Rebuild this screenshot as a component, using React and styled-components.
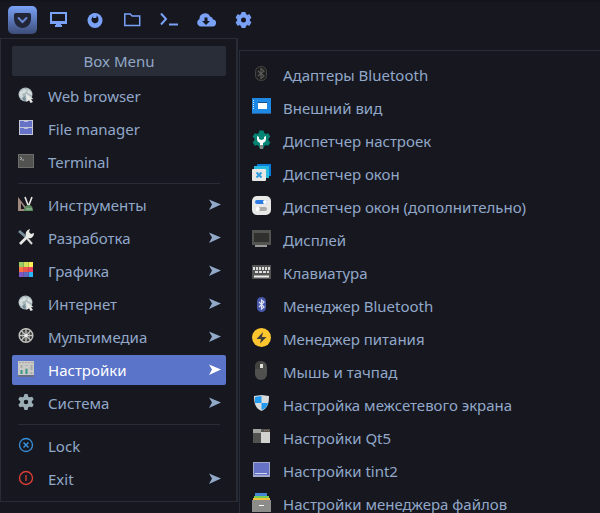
import React, { useState } from "react";
import styled, { createGlobalStyle, css } from "styled-components";

const color = {
  bg: "#171720",
  edge: "#282c37",
  title: "#292d37",
  text: "#91a8c8",
  accent: "#7aa2f7",
  active: "#5a74ca",
};

const GlobalStyle = createGlobalStyle`
  * { box-sizing: border-box; }
  html, body { margin: 0; height: 100%; overflow: hidden; background: ${color.bg}; }
  body { font: 15px/20px "Noto Sans", sans-serif; color: ${color.text}; }
  button { font: inherit; color: inherit; background: none; border: 0; padding: 0; margin: 0; }
`;

const Desktop = styled.div`
  height: 100vh;
  overflow: hidden;
  display: flex;
  flex-direction: column;
`;

const Toolbar = styled.header`
  flex: none;
  display: flex;
  align-items: center;
  height: 38px;
  padding: 0 8px;
  border-top: 2px solid #14151c;
`;

const StartButton = styled.button`
  display: grid;
  place-items: center;
  width: 29px;
  height: 28px;
  margin-right: 12px;
  border-radius: 5px;
  background: linear-gradient(#7aa2f7, #3c4c78);
`;

const LaunchButton = styled.button`
  display: grid;
  place-items: center;
  width: 20px;
  height: 20px;
  margin-right: 17px;
  color: ${color.accent};
`;

const Menus = styled.main`
  flex: 1;
  display: flex;
  align-items: flex-start;
  min-height: 0;
`;

const Menu = styled.nav`
  flex: none;
  width: 238px;
  padding: 7px 10px 7px 11px;
  border: 1px solid ${color.edge};
  border-right-width: 2px;
`;

const MenuTitle = styled.h1`
  margin: 0 0 5px;
  padding: 5px 0;
  font-size: inherit;
  font-weight: 400;
  text-align: center;
  border-radius: 2px;
  background: ${color.title};
`;

const Submenu = styled.nav`
  flex: 1;
  min-width: 0;
  margin: 12px 0 0 1px;
  padding: 9px 12px;
  border: solid ${color.edge};
  border-width: 1px 0 0 1px;
`;

const List = styled.ul`
  list-style: none;
  margin: 0;
  padding: 0;
  display: flex;
  flex-direction: column;
  gap: 3px;
`;

const Separator = styled.hr`
  margin: 6px;
  border: 0;
  border-top: 1px solid ${color.edge};
`;

const MenuItem = styled.button`
  display: flex;
  align-items: center;
  width: 100%;
  height: 30px;
  padding: 0 5px 0 ${(p) => (p.$wide ? 0 : 6)}px;
  gap: ${(p) => (p.$wide ? 12 : 14)}px;
  text-align: left;
  white-space: nowrap;
  border-radius: 2px;
  ${(p) => p.$active && css`
    color: #fff;
    background: ${color.active};
  `}
`;

const Icon = styled.svg`
  flex: none;
  display: block;
  margin-bottom: 3px;
`;

const Glyph = styled.svg`
  display: block;
`;

const Label = styled.span`
  flex: 1;
`;

const art = {
  globe: (
    <>
      <circle cx="7.5" cy="7.5" r="7" fill="#a9b8bd" />
      <path d="M2 5 6 2l3 1-2 3-3 1 1 3-1 2-3-4zM10 2l4 4v2l-3-1-2-2z" fill="#d5dcdc" />
      <path d="M4 11 7 9l1 4-2 1z" fill="#78909c" />
      <path d="M8 6.500 15.500 12l-2.500.3 2 2.700-2.500 1-1.500-3L8.500 15z" fill="#e6e8e5" />
    </>
  ),
  files: (
    <>
      <path d="M1 0h14v15H1z" fill="#c5c8d6" />
      <path d="M2 1h12v6H2zM2 8h12v6H2z" fill="#6572c8" />
      <path d="M6 1h4v1H6zM6 8h4v1H6z" fill="#b8bde0" />
    </>
  ),
  terminal: (
    <>
      <path d="M0 1h16v14H0z" fill="#6c6c6a" />
      <path d="M1 2h14v12H1z" fill="#525250" />
      <path d="m2 4 2 1.500L2 7M4 7h2" stroke="#ccc" strokeWidth=".8" fill="none" />
    </>
  ),
  tools: (
    <>
      <path d="M0 1v14h11zM3 7l4 6H3z" fill="#a1887f" fillRule="evenodd" />
      <path d="m7 1 3 8M14 1l-3 8" stroke="#ece9e4" strokeWidth="1.600" />
      <path d="M6 15c0-4 2-6 5-6s4 3 4 6z" fill="#5c8a61" />
      <path d="M8 13h6" stroke="#8fb38d" strokeWidth="1.500" />
    </>
  ),
  dev: (
    <>
      <path d="m1 2 7 6" stroke="#78909c" strokeWidth="2.800" />
      <path d="m8 8 6 7" stroke="#d8d8d5" strokeWidth="2" />
      <path d="m2 15 8-8" stroke="#e8e8e4" strokeWidth="2.600" />
      <path d="M8 7c-1-4 1-6 4-7l-1 3 2 2 3-1c0 4-3 6-6 5z" fill="#e8e8e4" />
    </>
  ),
  graphics: (
    <>
      {["#9ccc65", "#d4e157", "#ffee58", "#ff7043", "#ef5350", "#ec4065", "#7e57c2", "#5c6bc0", "#29b6f6"].map((fill, i) => (
        <rect key={fill} x={1 + (i % 3) * 5} y={Math.floor(i / 3) * 5} width={i % 3 === 2 ? 4 : 5} height="5" fill={fill} />
      ))}
      <path d="M5.500 0v15M10.500 0v15" stroke="#333" strokeOpacity=".2" />
    </>
  ),
  media: (
    <>
      <circle cx="8" cy="7.5" r="6.800" fill="#2c2c2d" stroke="#bdbdba" strokeWidth="1.500" />
      <path d="M8 1v13M1.500 7.500h13M3.500 3l9 9M12.500 3l-9 9" stroke="#c8c8c5" strokeWidth="1.300" />
      <circle cx="8" cy="7.500" r="4" fill="none" stroke="#aaa" strokeWidth=".7" />
      <circle cx="8" cy="7.500" r="1.500" fill="#eee" />
    </>
  ),
  mixer: (
    <>
      <path d="M0 0h16v15H0z" fill="#c9c9c5" />
      <path d="M0 14h16v2H0z" fill="#686e88" />
      <path d="M1 1.500h14" stroke="#aca7a2" strokeDasharray="2 1" />
      <path d="M3.500 4v9M8.500 4v9M13.500 4v9" stroke="#a8adaa" strokeWidth="2" />
      <path d="M3.500 9v4M8.500 8v5" stroke="#409b91" strokeWidth="2" />
      <path d="M2 8h3M7 6h3M12 10h3" stroke="#e5e5e2" />
    </>
  ),
  system: (
    <>
      <circle cx="8" cy="8" r="4" fill="none" stroke="#9badb5" strokeWidth="3.500" />
      {[0, 60, 120, 180, 240, 300].map((a) => (
        <path key={a} d="m5.500 3.500 1-3.500h3l1 3.500z" fill="#9badb5" transform={`rotate(${a} 8 8)`} />
      ))}
    </>
  ),
  lock: (
    <>
      <circle cx="8" cy="8" r="6.500" fill="none" stroke="#3790db" strokeWidth="1.300" />
      <path d="m5.500 5.500 5 5M10.500 5.500l-5 5" stroke="#3790db" strokeWidth="1.500" />
    </>
  ),
  exit: (
    <>
      <circle cx="8" cy="8" r="6.500" fill="none" stroke="#dc3e36" strokeWidth="1.400" />
      <path d="M8 5v6" stroke="#c63b35" strokeWidth="1.500" />
    </>
  ),
  adapter: (
    <>
      <rect x="3.500" y="2.500" width="11" height="14" rx="5" fill="#202022" stroke="#464644" />
      <path d="m6 7 6 5-3 2.500V4.500L12 7l-6 5" fill="none" stroke="#5a5a57" strokeWidth="1.200" />
    </>
  ),
  appearance: (
    <>
      <path d="M0 1h19v16H0z" fill="#1e88e5" />
      <path d="M0 16h19v1H0z" fill="#285c93" />
      <path d="M6 5h9v7H6z" fill="#fff" />
      <path d="M6 5.500h9" stroke="#15528c" />
      <path d="M1.500 3v10" stroke="#d5e8fa" strokeDasharray="1 1" />
    </>
  ),
  settings: (
    <>
      <circle cx="9.500" cy="9.500" r="7" fill="#058473" />
      {[0, 60, 120, 180, 240, 300].map((a) => (
        <path key={a} d="m6.500 4 1-3.500h4l1 3.500z" fill="#058473" transform={`rotate(${a} 9.5 9.5)`} />
      ))}
      <path d="M5 6v3c0 2 1 3 3 4v6h3v-6c2-1 3-2 3-4V6l-2 1v2l-2.500 1L7 9V7z" fill="#fff" />
      <path d="M8 15h3v4H8z" fill="#858985" />
    </>
  ),
  windows: (
    <>
      <path d="M5 1h14v12H5z" fill="#087cd8" />
      <path d="M2 3h15v12H2z" fill="#28b9df" />
      <rect y="6" width="14" height="12" rx="1" fill="#e7e7e5" />
      <path d="m4.500 9.500 5 5M9.500 9.500l-5 5" stroke="#309bdf" strokeWidth="2" />
    </>
  ),
  tweaks: (
    <>
      <rect width="19" height="19" rx="5" fill="#e8e8e6" />
      <rect x="3" y="4" width="12" height="4" rx="2" fill="#2b7be3" />
      <circle cx="13" cy="6" r="2" fill="#fff" />
      <rect x="3" y="11" width="12" height="4" rx="2" fill="#aaa" />
      <circle cx="5.500" cy="13" r="2.300" fill="#fff" />
    </>
  ),
  display: (
    <>
      <path d="M0 1h19v15H0z" fill="#535351" />
      <path d="M2 4h15v9H2z" fill="#30302f" />
      <path d="M3 16h12v2H3z" fill="#999997" />
    </>
  ),
  keyboard: (
    <>
      <path d="M0 3h19v14H0z" fill="#555553" />
      <path d="M1 6.500h17" stroke="#ddd" strokeWidth="3" strokeDasharray="2 1" />
      <path d="M3 10h14" stroke="#ddd" strokeWidth="2" strokeDasharray="3 1" />
      <path d="M2 14.500h15" stroke="#eee" strokeWidth="2" />
    </>
  ),
  bluetooth: (
    <>
      <rect x="5" y="2" width="9" height="15" rx="4.500" fill="#4858ad" />
      <path d="m7 7 5 5-2.500 2V5L12 7l-5 5" fill="none" stroke="#dce0f0" strokeWidth="1.200" />
    </>
  ),
  power: (
    <>
      <circle cx="9.500" cy="9.500" r="9.500" fill="#fdc62f" />
      <path d="M11 4 4.500 11H9l-1 4.500L14.500 9H10z" fill="#3e3d3a" />
    </>
  ),
  mouse: (
    <>
      <rect x="3" y="0" width="12" height="19" rx="6" fill="#50504e" />
      <path d="M9 0v8H3V6c0-4 2-6 6-6z" fill="#42423f" />
      <path d="M8 3h3v4H8z" fill="#e0e0dd" />
    </>
  ),
  shield: (
    <>
      <path d="m2 2 7.500-1L17 2c0 7-1 12-7.500 15C3 14 2 9 2 2z" fill="#d8dbdc" />
      <path d="M3 3 9.500 2v7H3zM9.500 9H16c-1 4-3 6-6.500 7z" fill="#219af2" />
    </>
  ),
  qt: (
    <>
      <path d="M1 2h17v14H1z" fill="#d2d2d1" />
      <path d="M1 6h8v10H1z" fill="#525250" />
      <path d="M1 2h8v4H1z" fill="#a4a4a1" />
      <path d="M9 2h9v3H9z" fill="#555553" />
      <path d="M12 3.500h5" stroke="#a4715e" strokeDasharray="1 1" />
    </>
  ),
  tint: (
    <>
      <path d="M1 2h17v15H1z" fill="#a2a9ca" />
      <path d="M2 3h15v12H2z" fill="#6672c6" />
      <path d="M3 13.500h12" stroke="#d4d8ec" />
    </>
  ),
  cabinet: (
    <>
      <path d="M3 0h12v3H3z" fill="#4488d8" />
      <path d="M2 3h15v2H2z" fill="#79cf52" />
      <path d="M1 5h17v2H1z" fill="#f4c33e" />
      <path d="M0 7h19v12H0z" fill="#8c8c8a" />
      <path d="M7 12.500h5" stroke="#fff" />
    </>
  ),
};

const launchers = [
  ["Desktop", <path key="p" fillRule="evenodd" d="M1 2h17v12h-6v1h1v2H6v-2h1v-1H1zm2 2v7h13V4z" fill="currentColor" />],
  ["Browser", <g key="g"><circle cx="9" cy="10.500" r="7.500" fill="currentColor" /><path d="M9.500 5c-3 1-5 4-3.500 6.500 2 3 6 2 6.500-1.500 0-3-1-4-3-5z" fill="#171720" /><path d="M7.500 3c3 1 4 3 2.500 5H7z" fill="currentColor" /></g>],
  ["Files", <path key="p" d="M1.800 4h5.400l2 2h7.500v9.500H1.800z" fill="none" stroke="currentColor" strokeWidth="1.500" />],
  ["Console", <path key="p" d="m1 3.500 5 5.500-5 5.500M9 14.500h9" fill="none" stroke="currentColor" strokeWidth="2" />],
  ["Downloads", <g key="g"><path d="M4 16.500a4 4 0 0 1-1.500-7.600A5.500 5.500 0 0 1 13 6.500 3.500 3.500 0 0 1 16 9.500a3.500 3.500 0 0 1-1 7z" fill="currentColor" /><path d="M7.500 7.500h3V11H13l-4 4-4-4h2.500z" fill="#171720" /></g>],
  ["Settings", <g key="g"><circle cx="9.500" cy="10" r="4.500" fill="none" stroke="currentColor" strokeWidth="4" />{[0, 60, 120, 180, 240, 300].map((a) => <path key={a} d="m7 4 .6-2h3.800l.6 2z" fill="currentColor" transform={`rotate(${a} 9.5 10)`} />)}</g>],
];

const groups = [
  [["globe", "Web browser"], ["files", "File manager"], ["terminal", "Terminal"]],
  [
    ["tools", "Инструменты", true],
    ["dev", "Разработка", true],
    ["graphics", "Графика", true],
    ["globe", "Интернет", true],
    ["media", "Мультимедиа", true],
    ["mixer", "Настройки", true],
    ["system", "Система", true],
  ],
  [["lock", "Lock"], ["exit", "Exit", true]],
];

const settings = [
  ["adapter", "Адаптеры Bluetooth"],
  ["appearance", "Внешний вид"],
  ["settings", "Диспетчер настроек"],
  ["windows", "Диспетчер окон"],
  ["tweaks", "Диспетчер окон (дополнительно)"],
  ["display", "Дисплей"],
  ["keyboard", "Клавиатура"],
  ["bluetooth", "Менеджер Bluetooth"],
  ["power", "Менеджер питания"],
  ["mouse", "Мышь и тачпад"],
  ["shield", "Настройка межсетевого экрана"],
  ["qt", "Настройки Qt5"],
  ["tint", "Настройки tint2"],
  ["cabinet", "Настройки менеджера файлов"],
];

function Entry({ icon, label, arrow, active, wide, onClick }) {
  const size = wide ? 19 : 16;
  return (
    <li>
      <MenuItem type="button" $active={active} $wide={wide} onClick={onClick} aria-haspopup={arrow ? "menu" : undefined}>
        <Icon width={size} height={size} viewBox={`0 0 ${size} ${size}`} aria-hidden="true">{art[icon]}</Icon>
        <Label>{label}</Label>
        {arrow && (
          <Glyph width="12" height="12" viewBox="0 0 12 12" aria-hidden="true">
            <path d="m0 .5 12 5L0 11l3-5.500z" fill="currentColor" />
          </Glyph>
        )}
      </MenuItem>
    </li>
  );
}

export default function App() {
  const [open, setOpen] = useState("Настройки");
  return (
    <>
      <GlobalStyle />
      <Desktop>
        <Toolbar>
          <StartButton type="button" aria-label="Menu">
            <Glyph width="19" height="17" viewBox="0 0 19 17" aria-hidden="true">
              <path d="M3 1h13q2 0 2 2v4c0 5-4 9-8.500 9S1 12 1 7V3q0-2 2-2z" fill="#222536" />
              <path d="m5.500 6 4 4 4-4" fill="none" stroke="#6686d0" strokeWidth="2" strokeLinecap="round" />
            </Glyph>
          </StartButton>
          {launchers.map(([name, drawing]) => (
            <LaunchButton key={name} type="button" aria-label={name}>
              <Glyph width="20" height="20" viewBox="0 0 20 20" aria-hidden="true">{drawing}</Glyph>
            </LaunchButton>
          ))}
        </Toolbar>
        <Menus>
          <Menu aria-label="Box Menu">
            <MenuTitle>Box Menu</MenuTitle>
            {groups.map((items, i) => (
              <React.Fragment key={i}>
                {i > 0 && <Separator />}
                <List>
                  {items.map(([icon, label, arrow]) => (
                    <Entry key={label} icon={icon} label={label} arrow={arrow} active={open === label} onClick={() => arrow && setOpen(label)} />
                  ))}
                </List>
              </React.Fragment>
            ))}
          </Menu>
          <Submenu aria-label="Настройки">
            <List>
              {settings.map(([icon, label]) => (
                <Entry key={label} icon={icon} label={label} wide />
              ))}
            </List>
          </Submenu>
        </Menus>
      </Desktop>
    </>
  );
}
